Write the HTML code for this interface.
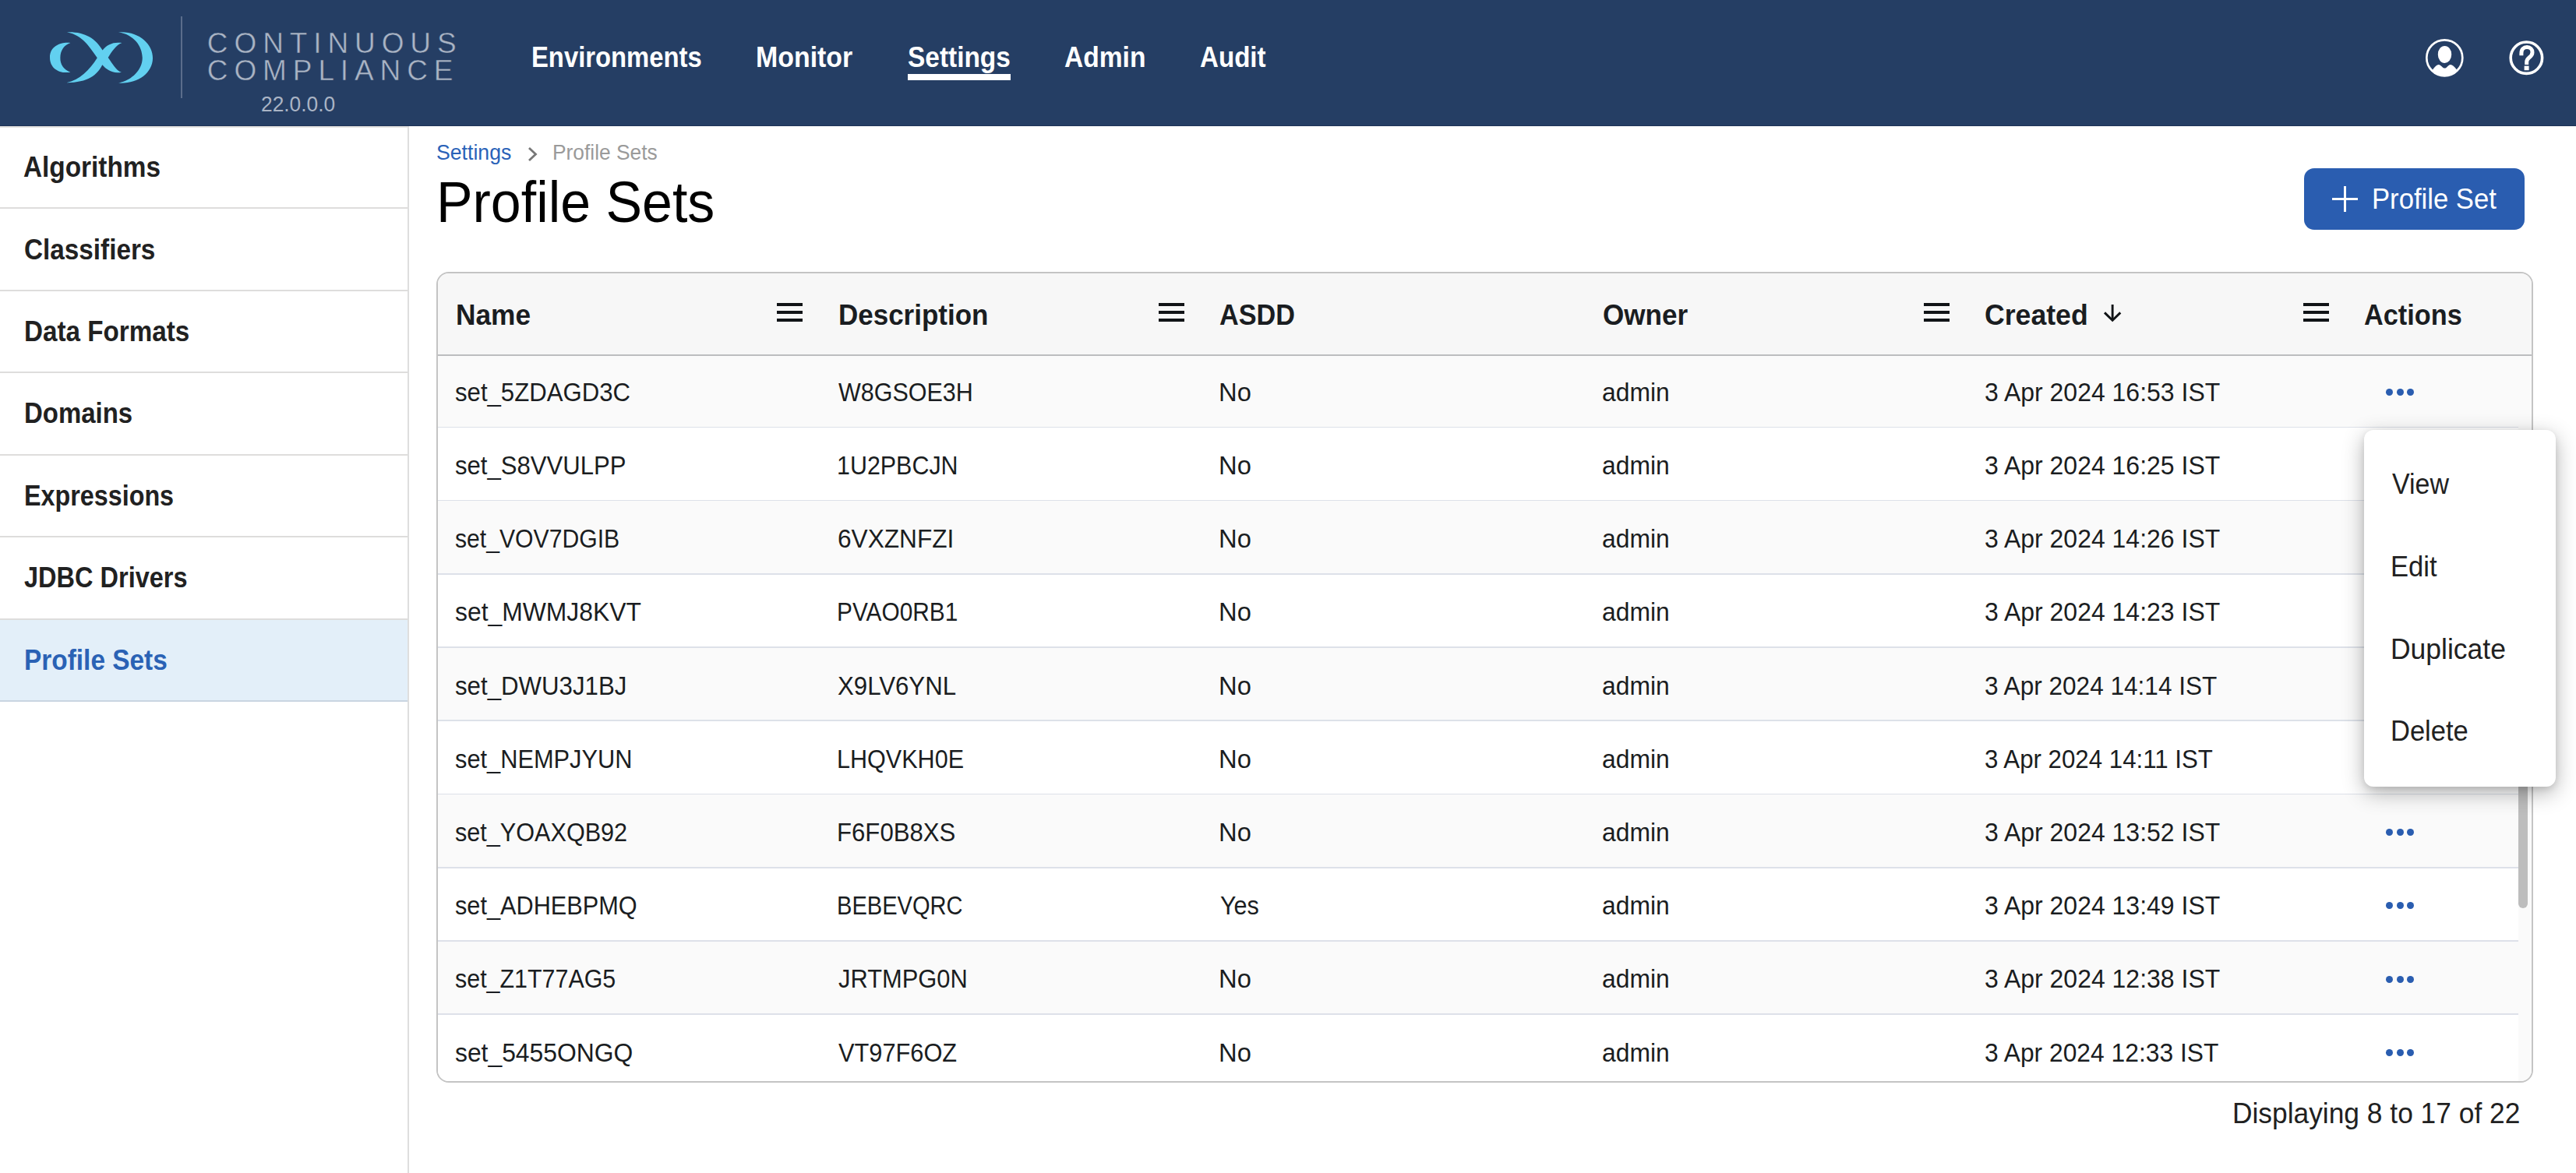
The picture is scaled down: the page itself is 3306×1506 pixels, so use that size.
<!DOCTYPE html>
<html><head><meta charset="utf-8">
<style>
html,body{margin:0;padding:0;}
body{width:3306px;height:1506px;overflow:hidden;position:relative;background:#fff;font-family:"Liberation Sans",sans-serif;}
.a{position:absolute;}
.t{position:absolute;white-space:nowrap;line-height:1;}
.hb{position:absolute;width:33px;height:24px;}
.hb i{position:absolute;left:0;width:33px;height:3.6px;background:#111417;}
.dots{position:absolute;width:36px;height:9px;}
.dots i{position:absolute;top:0;width:9px;height:9px;border-radius:50%;background:#2a5db0;}
</style></head><body>

<div class="a" style="left:0;top:0;width:3306px;height:162px;background:#253e64"></div>
<div class="a" style="left:0;top:161px;width:3306px;height:1px;background:#1f3357"></div>
<svg class="a" style="left:60px;top:36px" width="140" height="76" viewBox="0 0 2161 1173">
<g fill="#62d0f0">
<path d="M470,295 C330,270 60,330 62,585 C62,800 250,910 470,875 C330,820 265,720 268,585 C270,440 350,335 470,295 Z"/>
<path d="M1420,82 C1800,50 2105,300 2100,600 C2095,900 1800,1110 1420,1090 C1700,1030 1895,820 1895,590 C1890,350 1720,130 1420,82 Z"/>
<path d="M400,82 C750,70 960,200 1105,440 C1200,320 1330,270 1490,295 C1370,340 1290,470 1215,585 C1300,700 1370,840 1480,875 C1300,910 1180,820 1100,730 C1000,930 820,1080 390,1085 C650,1030 850,830 1000,590 C850,380 720,150 400,82 Z"/>
</g></svg>
<div class="a" style="left:232px;top:21px;width:2px;height:105px;background:#5b6d8b"></div>
<div class="a" style="left:1165px;top:95px;width:132px;height:8px;background:#fff"></div>
<svg class="a" style="left:3110px;top:47px" width="56" height="56" viewBox="0 0 56 56">
<defs><clipPath id="uc"><circle cx="27.3" cy="27.3" r="23"/></clipPath></defs>
<circle cx="27.3" cy="27.3" r="23" fill="none" stroke="#fff" stroke-width="2.7"/>
<ellipse cx="27.5" cy="22.9" rx="8.7" ry="11" fill="#fff"/>
<path clip-path="url(#uc)" d="M6,52 L12.2,42.2 C15,38.6 17.3,36 19.8,35.9 C22.3,35.9 25,40.6 27.5,40.6 C30,40.6 32.3,35.9 34.8,35.9 C37.3,36 40,38.6 42.8,42.2 L49,52 Z" fill="#fff"/>
</svg>
<svg class="a" style="left:3216px;top:48px" width="52" height="52" viewBox="0 0 52 52">
<circle cx="26.4" cy="26.2" r="20.2" fill="none" stroke="#fff" stroke-width="3.6"/>
<path d="M19.9,23.2 L19.9,20.5 C19.9,15.2 23,12.6 27.1,12.6 C31.4,12.6 34,15.6 34,19.2 C34,22.6 31.8,24.4 29.8,26 C27.6,27.8 26.7,29.4 26.7,31.5 L26.7,34.9" fill="none" stroke="#fff" stroke-width="5"/>
<rect x="23.6" y="36.6" width="6" height="5.6" fill="#fff"/>
</svg>
<div class="a" style="left:0;top:162px;width:523px;height:2px;background:#e4e3e1"></div>
<div class="a" style="left:523px;top:162px;width:2px;height:1344px;background:#dedede"></div>
<div class="a" style="left:0;top:795.6px;width:523px;height:103.5px;background:#e3eff9"></div>
<div class="a" style="left:0;top:266.1px;width:523px;height:2px;background:#dedddc"></div>
<div class="a" style="left:0;top:371.6px;width:523px;height:2px;background:#dedddc"></div>
<div class="a" style="left:0;top:477.1px;width:523px;height:2px;background:#dedddc"></div>
<div class="a" style="left:0;top:582.6px;width:523px;height:2px;background:#dedddc"></div>
<div class="a" style="left:0;top:688.1px;width:523px;height:2px;background:#dedddc"></div>
<div class="a" style="left:0;top:793.6px;width:523px;height:2px;background:#dedddc"></div>
<div class="a" style="left:0;top:899.1px;width:523px;height:2px;background:#c9d5e1"></div>
<svg class="a" style="left:674px;top:186.5px" width="20" height="22" viewBox="0 0 20 22"><path d="M5,3 L13.5,11 L5,19" fill="none" stroke="#777" stroke-width="2.8"/></svg>
<div class="a" style="left:2957px;top:216px;width:283px;height:79px;border-radius:13px;background:#2a5db0"></div>
<div class="a" style="left:3007.8px;top:239px;width:3.6px;height:33px;background:#fff"></div>
<div class="a" style="left:2993px;top:253.7px;width:33px;height:3.6px;background:#fff"></div>
<div class="a" style="left:560px;top:349px;width:2687px;height:1037px;border:2px solid #c4c4c4;border-radius:16px;overflow:hidden;background:#fff">
<div class="a" style="left:0;top:0;width:2687px;height:104px;background:#f7f7f7"></div>
<div class="a" style="left:0;top:104px;width:2687px;height:2px;background:#bcbdbf"></div>
<div class="hb" style="left:435px;top:38.2px"><i style="top:0"></i><i style="top:9.9px"></i><i style="top:19.8px"></i></div>
<div class="hb" style="left:925.4px;top:38.2px"><i style="top:0"></i><i style="top:9.9px"></i><i style="top:19.8px"></i></div>
<div class="hb" style="left:1906.7px;top:38.2px"><i style="top:0"></i><i style="top:9.9px"></i><i style="top:19.8px"></i></div>
<div class="hb" style="left:2394.1px;top:38.2px"><i style="top:0"></i><i style="top:9.9px"></i><i style="top:19.8px"></i></div>
<svg class="a" style="left:2135px;top:38px" width="28" height="27" viewBox="0 0 28 27"><path d="M14.15,1.9 L14.15,21" stroke="#111417" stroke-width="2.9" fill="none"/><path d="M4,12.4 L14.15,22.3 L24.3,12.4" stroke="#111417" stroke-width="2.9" fill="none"/></svg>
<div class="a" style="left:0;top:106px;width:2670px;height:90.5px;background:#fafafa"></div>
<div class="a" style="left:0;top:196.5px;width:2670px;height:1.6px;background:#dde1e9"></div>
<div class="dots" style="left:2500px;top:147.7px"><i style="left:0"></i><i style="left:13.5px"></i><i style="left:27px"></i></div>
<div class="a" style="left:0;top:198.1px;width:2670px;height:92.64px;background:#ffffff"></div>
<div class="a" style="left:0;top:290.74px;width:2670px;height:1.6px;background:#dde1e9"></div>
<div class="a" style="left:0;top:292.34px;width:2670px;height:92.64px;background:#fafafa"></div>
<div class="a" style="left:0;top:384.98px;width:2670px;height:1.6px;background:#dde1e9"></div>
<div class="a" style="left:0;top:386.58px;width:2670px;height:92.64px;background:#ffffff"></div>
<div class="a" style="left:0;top:479.22px;width:2670px;height:1.6px;background:#dde1e9"></div>
<div class="a" style="left:0;top:480.82px;width:2670px;height:92.64px;background:#fafafa"></div>
<div class="a" style="left:0;top:573.46px;width:2670px;height:1.6px;background:#dde1e9"></div>
<div class="a" style="left:0;top:575.06px;width:2670px;height:92.64px;background:#ffffff"></div>
<div class="a" style="left:0;top:667.7px;width:2670px;height:1.6px;background:#dde1e9"></div>
<div class="a" style="left:0;top:669.3px;width:2670px;height:92.64px;background:#fafafa"></div>
<div class="a" style="left:0;top:761.94px;width:2670px;height:1.6px;background:#dde1e9"></div>
<div class="dots" style="left:2500px;top:713.14px"><i style="left:0"></i><i style="left:13.5px"></i><i style="left:27px"></i></div>
<div class="a" style="left:0;top:763.54px;width:2670px;height:92.64px;background:#ffffff"></div>
<div class="a" style="left:0;top:856.18px;width:2670px;height:1.6px;background:#dde1e9"></div>
<div class="dots" style="left:2500px;top:807.38px"><i style="left:0"></i><i style="left:13.5px"></i><i style="left:27px"></i></div>
<div class="a" style="left:0;top:857.78px;width:2670px;height:92.64px;background:#fafafa"></div>
<div class="a" style="left:0;top:950.42px;width:2670px;height:1.6px;background:#dde1e9"></div>
<div class="dots" style="left:2500px;top:901.62px"><i style="left:0"></i><i style="left:13.5px"></i><i style="left:27px"></i></div>
<div class="a" style="left:0;top:952.02px;width:2670px;height:92.64px;background:#ffffff"></div>
<div class="a" style="left:0;top:1044.66px;width:2670px;height:1.6px;background:#dde1e9"></div>
<div class="dots" style="left:2500px;top:995.86px"><i style="left:0"></i><i style="left:13.5px"></i><i style="left:27px"></i></div>
<div class="a" style="left:2670px;top:106px;width:17px;height:1100px;background:#fafafa"></div>
<div class="a" style="left:2670.2px;top:609px;width:11.8px;height:205.5px;background:#bdbdbd;border-radius:0 0 6px 6px"></div>
<div class="t" style="left:22.95px;top:35.51px;font-size:36px;font-weight:700;transform:scaleX(0.9792);transform-origin:0 0;color:#1a1d21;">Name</div>
<div class="t" style="left:513.57px;top:35.51px;font-size:36px;font-weight:700;transform:scaleX(0.9713);transform-origin:0 0;color:#1a1d21;">Description</div>
<div class="t" style="left:1003.43px;top:35.51px;font-size:36px;font-weight:700;transform:scaleX(0.9501);transform-origin:0 0;color:#1a1d21;">ASDD</div>
<div class="t" style="left:1494.73px;top:35.51px;font-size:36px;font-weight:700;transform:scaleX(0.9747);transform-origin:0 0;color:#1a1d21;">Owner</div>
<div class="t" style="left:1985.21px;top:35.51px;font-size:36px;font-weight:700;transform:scaleX(0.9898);transform-origin:0 0;color:#1a1d21;">Created</div>
<div class="t" style="left:2472.23px;top:35.51px;font-size:36px;font-weight:700;transform:scaleX(0.9524);transform-origin:0 0;color:#1a1d21;">Actions</div>
<div class="t" style="left:22.22px;top:134.56px;font-size:34px;transform:scaleX(0.9157);transform-origin:0 0;color:#1a1d21;">set_5ZDAGD3C</div>
<div class="t" style="left:514.23px;top:134.56px;font-size:34px;transform:scaleX(0.8964);transform-origin:0 0;color:#1a1d21;">W8GSOE3H</div>
<div class="t" style="left:1001.84px;top:134.56px;font-size:34px;transform:scaleX(0.9624);transform-origin:0 0;color:#1a1d21;">No</div>
<div class="t" style="left:1494.07px;top:134.56px;font-size:34px;transform:scaleX(0.9365);transform-origin:0 0;color:#1a1d21;">admin</div>
<div class="t" style="left:1984.97px;top:134.56px;font-size:34px;transform:scaleX(0.9406);transform-origin:0 0;color:#1a1d21;">3 Apr 2024 16:53 IST</div>
<div class="t" style="left:22.22px;top:228.8px;font-size:34px;transform:scaleX(0.9141);transform-origin:0 0;color:#1a1d21;">set_S8VVULPP</div>
<div class="t" style="left:512.41px;top:228.8px;font-size:34px;transform:scaleX(0.8949);transform-origin:0 0;color:#1a1d21;">1U2PBCJN</div>
<div class="t" style="left:1001.84px;top:228.8px;font-size:34px;transform:scaleX(0.9624);transform-origin:0 0;color:#1a1d21;">No</div>
<div class="t" style="left:1494.07px;top:228.8px;font-size:34px;transform:scaleX(0.9365);transform-origin:0 0;color:#1a1d21;">admin</div>
<div class="t" style="left:1984.97px;top:228.8px;font-size:34px;transform:scaleX(0.9406);transform-origin:0 0;color:#1a1d21;">3 Apr 2024 16:25 IST</div>
<div class="t" style="left:22.24px;top:323.04px;font-size:34px;transform:scaleX(0.8867);transform-origin:0 0;color:#1a1d21;">set_VOV7DGIB</div>
<div class="t" style="left:512.57px;top:323.04px;font-size:34px;transform:scaleX(0.9302);transform-origin:0 0;color:#1a1d21;">6VXZNFZI</div>
<div class="t" style="left:1001.84px;top:323.04px;font-size:34px;transform:scaleX(0.9624);transform-origin:0 0;color:#1a1d21;">No</div>
<div class="t" style="left:1494.07px;top:323.04px;font-size:34px;transform:scaleX(0.9365);transform-origin:0 0;color:#1a1d21;">admin</div>
<div class="t" style="left:1984.97px;top:323.04px;font-size:34px;transform:scaleX(0.9406);transform-origin:0 0;color:#1a1d21;">3 Apr 2024 14:26 IST</div>
<div class="t" style="left:22.2px;top:417.28px;font-size:34px;transform:scaleX(0.9366);transform-origin:0 0;color:#1a1d21;">set_MWMJ8KVT</div>
<div class="t" style="left:511.77px;top:417.28px;font-size:34px;transform:scaleX(0.8772);transform-origin:0 0;color:#1a1d21;">PVAO0RB1</div>
<div class="t" style="left:1001.84px;top:417.28px;font-size:34px;transform:scaleX(0.9624);transform-origin:0 0;color:#1a1d21;">No</div>
<div class="t" style="left:1494.07px;top:417.28px;font-size:34px;transform:scaleX(0.9365);transform-origin:0 0;color:#1a1d21;">admin</div>
<div class="t" style="left:1984.97px;top:417.28px;font-size:34px;transform:scaleX(0.9406);transform-origin:0 0;color:#1a1d21;">3 Apr 2024 14:23 IST</div>
<div class="t" style="left:22.21px;top:511.52px;font-size:34px;transform:scaleX(0.9184);transform-origin:0 0;color:#1a1d21;">set_DWU3J1BJ</div>
<div class="t" style="left:513.36px;top:511.52px;font-size:34px;transform:scaleX(0.9177);transform-origin:0 0;color:#1a1d21;">X9LV6YNL</div>
<div class="t" style="left:1001.84px;top:511.52px;font-size:34px;transform:scaleX(0.9624);transform-origin:0 0;color:#1a1d21;">No</div>
<div class="t" style="left:1494.07px;top:511.52px;font-size:34px;transform:scaleX(0.9365);transform-origin:0 0;color:#1a1d21;">admin</div>
<div class="t" style="left:1984.98px;top:511.52px;font-size:34px;transform:scaleX(0.9284);transform-origin:0 0;color:#1a1d21;">3 Apr 2024 14:14 IST</div>
<div class="t" style="left:22.23px;top:605.76px;font-size:34px;transform:scaleX(0.9054);transform-origin:0 0;color:#1a1d21;">set_NEMPJYUN</div>
<div class="t" style="left:511.71px;top:605.76px;font-size:34px;transform:scaleX(0.8986);transform-origin:0 0;color:#1a1d21;">LHQVKH0E</div>
<div class="t" style="left:1001.84px;top:605.76px;font-size:34px;transform:scaleX(0.9624);transform-origin:0 0;color:#1a1d21;">No</div>
<div class="t" style="left:1494.07px;top:605.76px;font-size:34px;transform:scaleX(0.9365);transform-origin:0 0;color:#1a1d21;">admin</div>
<div class="t" style="left:1984.99px;top:605.76px;font-size:34px;transform:scaleX(0.9188);transform-origin:0 0;color:#1a1d21;">3 Apr 2024 14:11 IST</div>
<div class="t" style="left:22.23px;top:700px;font-size:34px;transform:scaleX(0.9001);transform-origin:0 0;color:#1a1d21;">set_YOAXQB92</div>
<div class="t" style="left:511.66px;top:700px;font-size:34px;transform:scaleX(0.9164);transform-origin:0 0;color:#1a1d21;">F6F0B8XS</div>
<div class="t" style="left:1001.84px;top:700px;font-size:34px;transform:scaleX(0.9624);transform-origin:0 0;color:#1a1d21;">No</div>
<div class="t" style="left:1494.07px;top:700px;font-size:34px;transform:scaleX(0.9365);transform-origin:0 0;color:#1a1d21;">admin</div>
<div class="t" style="left:1984.97px;top:700px;font-size:34px;transform:scaleX(0.9406);transform-origin:0 0;color:#1a1d21;">3 Apr 2024 13:52 IST</div>
<div class="t" style="left:22.23px;top:794.24px;font-size:34px;transform:scaleX(0.9028);transform-origin:0 0;color:#1a1d21;">set_ADHEBPMQ</div>
<div class="t" style="left:511.83px;top:794.24px;font-size:34px;transform:scaleX(0.8546);transform-origin:0 0;color:#1a1d21;">BEBEVQRC</div>
<div class="t" style="left:1003.68px;top:794.24px;font-size:34px;transform:scaleX(0.8985);transform-origin:0 0;color:#1a1d21;">Yes</div>
<div class="t" style="left:1494.07px;top:794.24px;font-size:34px;transform:scaleX(0.9365);transform-origin:0 0;color:#1a1d21;">admin</div>
<div class="t" style="left:1984.97px;top:794.24px;font-size:34px;transform:scaleX(0.9406);transform-origin:0 0;color:#1a1d21;">3 Apr 2024 13:49 IST</div>
<div class="t" style="left:22.24px;top:888.48px;font-size:34px;transform:scaleX(0.8947);transform-origin:0 0;color:#1a1d21;">set_Z1T77AG5</div>
<div class="t" style="left:513.6px;top:888.48px;font-size:34px;transform:scaleX(0.9074);transform-origin:0 0;color:#1a1d21;">JRTMPG0N</div>
<div class="t" style="left:1001.84px;top:888.48px;font-size:34px;transform:scaleX(0.9624);transform-origin:0 0;color:#1a1d21;">No</div>
<div class="t" style="left:1494.07px;top:888.48px;font-size:34px;transform:scaleX(0.9365);transform-origin:0 0;color:#1a1d21;">admin</div>
<div class="t" style="left:1984.97px;top:888.48px;font-size:34px;transform:scaleX(0.9406);transform-origin:0 0;color:#1a1d21;">3 Apr 2024 12:38 IST</div>
<div class="t" style="left:22.2px;top:982.72px;font-size:34px;transform:scaleX(0.9361);transform-origin:0 0;color:#1a1d21;">set_5455ONGQ</div>
<div class="t" style="left:514.21px;top:982.72px;font-size:34px;transform:scaleX(0.9048);transform-origin:0 0;color:#1a1d21;">VT97F6OZ</div>
<div class="t" style="left:1001.84px;top:982.72px;font-size:34px;transform:scaleX(0.9624);transform-origin:0 0;color:#1a1d21;">No</div>
<div class="t" style="left:1494.07px;top:982.72px;font-size:34px;transform:scaleX(0.9365);transform-origin:0 0;color:#1a1d21;">admin</div>
<div class="t" style="left:1984.97px;top:982.72px;font-size:34px;transform:scaleX(0.9346);transform-origin:0 0;color:#1a1d21;">3 Apr 2024 12:33 IST</div>
</div>
<div class="t" style="left:265.87px;top:37.46px;font-size:37px;letter-spacing:7.89px;color:#aab4c5;-webkit-text-stroke:0.5px #253e64;">CONTINUOUS</div>
<div class="t" style="left:265.87px;top:72.36px;font-size:37px;letter-spacing:7.88px;color:#aab4c5;-webkit-text-stroke:0.5px #253e64;">COMPLIANCE</div>
<div class="t" style="left:334.67px;top:120.46px;font-size:28px;transform:scaleX(0.9402);transform-origin:0 0;color:#aab4c5;">22.0.0.0</div>
<div class="t" style="left:682.23px;top:54.9px;font-size:37px;font-weight:700;transform:scaleX(0.8863);transform-origin:0 0;color:#fff;">Environments</div>
<div class="t" style="left:970.47px;top:54.9px;font-size:37px;font-weight:700;transform:scaleX(0.9163);transform-origin:0 0;color:#fff;">Monitor</div>
<div class="t" style="left:1165.03px;top:54.9px;font-size:37px;font-weight:700;transform:scaleX(0.9032);transform-origin:0 0;color:#fff;">Settings</div>
<div class="t" style="left:1366.15px;top:54.9px;font-size:37px;font-weight:700;transform:scaleX(0.9069);transform-origin:0 0;color:#fff;">Admin</div>
<div class="t" style="left:1539.66px;top:54.9px;font-size:37px;font-weight:700;transform:scaleX(0.8948);transform-origin:0 0;color:#fff;">Audit</div>
<div class="t" style="left:30.45px;top:197.41px;font-size:36px;font-weight:700;transform:scaleX(0.9267);transform-origin:0 0;color:#212121;">Algorithms</div>
<div class="t" style="left:31.28px;top:302.76px;font-size:36px;font-weight:700;transform:scaleX(0.9244);transform-origin:0 0;color:#212121;">Classifiers</div>
<div class="t" style="left:31.17px;top:408.11px;font-size:36px;font-weight:700;transform:scaleX(0.9224);transform-origin:0 0;color:#212121;">Data Formats</div>
<div class="t" style="left:31.18px;top:513.46px;font-size:36px;font-weight:700;transform:scaleX(0.9153);transform-origin:0 0;color:#212121;">Domains</div>
<div class="t" style="left:31.22px;top:618.81px;font-size:36px;font-weight:700;transform:scaleX(0.8971);transform-origin:0 0;color:#212121;">Expressions</div>
<div class="t" style="left:31.34px;top:724.16px;font-size:36px;font-weight:700;transform:scaleX(0.9028);transform-origin:0 0;color:#212121;">JDBC Drivers</div>
<div class="t" style="left:31.15px;top:829.51px;font-size:36px;font-weight:700;transform:scaleX(0.9281);transform-origin:0 0;color:#2a62b5;">Profile Sets</div>
<div class="t" style="left:560.26px;top:182.06px;font-size:28px;transform:scaleX(0.9524);transform-origin:0 0;color:#2a62b8;">Settings</div>
<div class="t" style="left:708.55px;top:182.06px;font-size:28px;transform:scaleX(0.9412);transform-origin:0 0;color:#9a9a9a;">Profile Sets</div>
<div class="t" style="left:559.55px;top:221.87px;font-size:75px;transform:scaleX(0.9315);transform-origin:0 0;color:#000;">Profile Sets</div>
<div class="t" style="left:3043.88px;top:236.86px;font-size:37px;transform:scaleX(0.9364);transform-origin:0 0;color:#fff;">Profile Set</div>
<div class="t" style="left:2865.22px;top:1410.66px;font-size:37px;transform:scaleX(0.9551);transform-origin:0 0;color:#212121;">Displaying 8 to 17 of 22</div>
<div class="a" style="left:3034px;top:552px;width:245.5px;height:457.5px;background:#fff;border-radius:12px;box-shadow:0 8px 28px rgba(0,0,0,0.30),0 3px 8px rgba(0,0,0,0.10)"></div>
<div class="t" style="left:3070.31px;top:604.46px;font-size:36px;transform:scaleX(0.9421);transform-origin:0 0;color:#212121;">View</div>
<div class="t" style="left:3068.24px;top:709.86px;font-size:36px;transform:scaleX(0.9596);transform-origin:0 0;color:#212121;">Edit</div>
<div class="t" style="left:3068.17px;top:816.06px;font-size:36px;transform:scaleX(0.9854);transform-origin:0 0;color:#212121;">Duplicate</div>
<div class="t" style="left:3068.24px;top:920.96px;font-size:36px;transform:scaleX(0.9587);transform-origin:0 0;color:#212121;">Delete</div>
</body></html>
